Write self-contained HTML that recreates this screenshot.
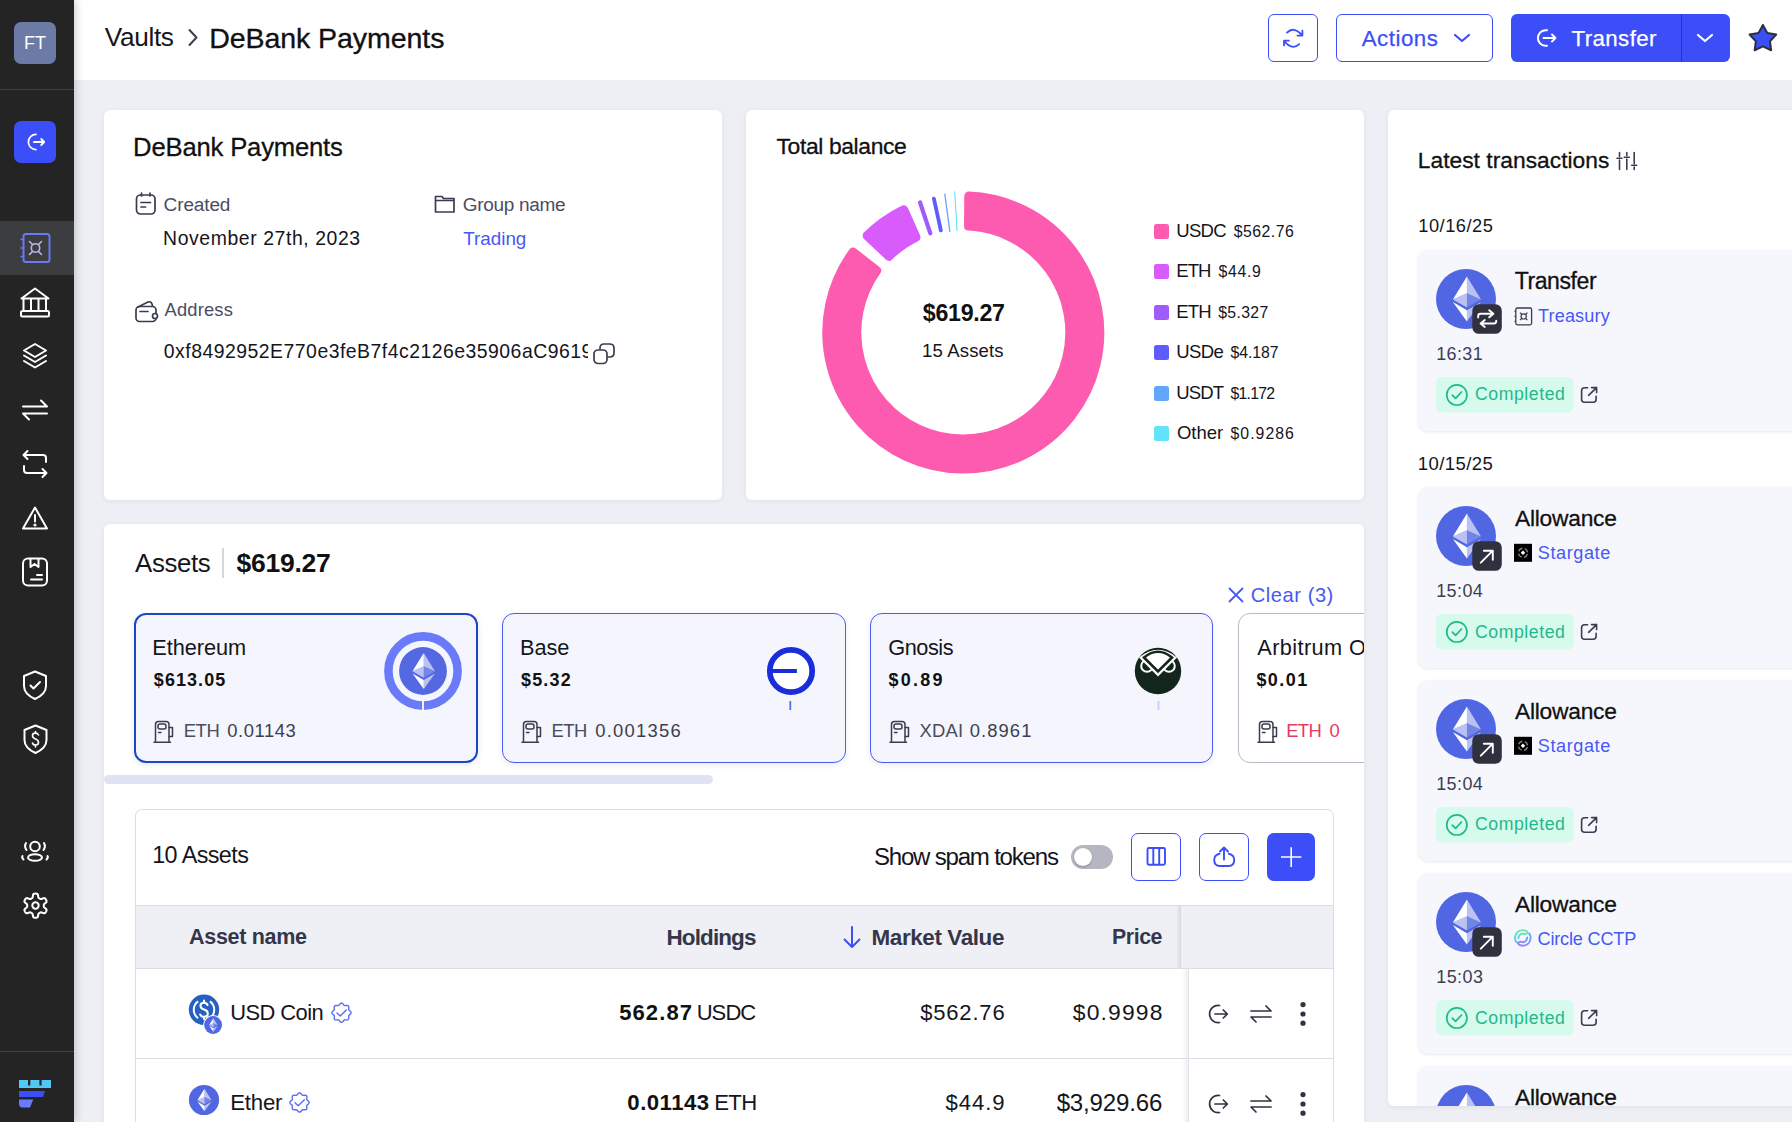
<!DOCTYPE html>
<html><head><meta charset="utf-8">
<style>
*{box-sizing:border-box;margin:0;padding:0}
html,body{width:1792px;height:1122px;overflow:hidden;background:#eeeff4;font-family:"Liberation Sans",sans-serif;color:#15151c;position:relative}
.abs{position:absolute}
#side{position:absolute;left:0;top:0;width:74px;height:1122px;background:#242424;z-index:5;box-shadow:2px 0 8px rgba(0,0,0,0.18)}
.card{position:absolute;background:#fff;border-radius:6px;box-shadow:0 1px 5px rgba(40,40,70,0.07)}
.t{position:absolute;white-space:nowrap;line-height:1}
</style></head><body>
<div id="side">
  <div class="abs" style="left:14px;top:22px;width:42px;height:42px;border-radius:7px;background:#6c7ba6;color:#fff;font-size:18px;text-align:center;line-height:42px">FT</div>
  <div class="abs" style="left:0;top:89px;width:74px;height:1px;background:#3e4056"></div>
  <div class="abs" style="left:14px;top:121px;width:42px;height:42px;border-radius:7px;background:#3b4ef8"></div>
  <div class="abs" style="left:0;top:221px;width:74px;height:54px;background:#3c3d3f"></div>
  <div class="abs" style="left:0;top:1051px;width:74px;height:1px;background:#3e4056"></div>

  <svg class="abs" style="left:0;top:0" width="74" height="1122" viewBox="0 0 74 1122" fill="none" stroke="#fff" stroke-width="2" stroke-linecap="round" stroke-linejoin="round">
    <!-- transfer icon in blue btn -->
    <path d="M36 134.4 A7.6 7.6 0 1 0 36 149.6" stroke-width="1.7"/>
    <path d="M33.9 142 H44 M41.2 139 L44.2 142 L41.2 145" stroke-width="1.8"/>
    <!-- vault (active) -->
    <rect x="23.5" y="234" width="26" height="28" rx="2.5" stroke="#6a78f5" stroke-width="2"/>
    <path d="M21 239.5h2.5 M21 248h2.5 M21 256.5h2.5" stroke="#6a78f5" stroke-width="1.6"/>
    <circle cx="35.5" cy="248" r="4.2" stroke="#b3bbec" stroke-width="1.6"/>
    <path d="M29.5 241.5l3 3 M41.5 241.5l-3 3 M29.5 254.5l3-3 M41.5 254.5l-3-3" stroke="#b3bbec" stroke-width="1.6"/>
    <!-- bank -->
    <path d="M21.5 298.5 L35 288.5 L48.5 298.5 Z"/>
    <rect x="21" y="311" width="28" height="5.5" rx="1.5"/>
    <path d="M23.5 299v12 M31 299v12 M38.5 299v12 M46 299v12"/>
    <!-- layers -->
    <path d="M35 344 L46 350.5 L35 357 L24 350.5 Z"/>
    <path d="M24 355.5 L35 362 L46 355.5"/>
    <path d="M24 361 L35 367.5 L46 361"/>
    <!-- swap -->
    <path d="M23 406.5 H47 M41 400.5 L47 406.5"/>
    <path d="M47 413.5 H23 M29 419.5 L23 413.5"/>
    <!-- repeat -->
    <path d="M27.5 451 L23.5 455 L27.5 459 M23.5 455 H43 Q46 455 46 458 V462"/>
    <path d="M42.5 477 L46.5 473 L42.5 469 M46.5 473 H27 Q24 473 24 470 V466"/>
    <!-- warning -->
    <path d="M35 507.5 L47 528.5 H23 Z"/>
    <path d="M35 515v6.5" /><circle cx="35" cy="525" r="0.6" fill="#fff"/>
    <!-- book/box -->
    <rect x="23" y="558.5" width="24" height="27" rx="5"/>
    <path d="M30.5 559v8l4-3 4 3v-8"/>
    <path d="M31 579.5h11 M37 575h5" />
    <!-- shield check -->
    <path d="M35 671.5 L46 676 V686 Q46 694 35 699 Q24 694 24 686 V676 Z"/>
    <path d="M30.5 685.5 L33.5 688.5 L40 682"/>
    <!-- shield $ -->
    <path d="M35.5 725.5 L46.5 730 V740 Q46.5 748 35.5 753 Q24.5 748 24.5 740 V730 Z"/>
    <path d="M38.5 735 Q37.5 733 35.5 733 Q32.5 733 32.5 735.5 Q32.5 738 35.5 739 Q38.5 740 38.5 742.5 Q38.5 745 35.5 745 Q33 745 32.5 743 M35.5 731.5v2 M35.5 745v2" stroke-width="1.6"/>
    <!-- people -->
    <circle cx="35" cy="846.5" r="4.8"/>
    <ellipse cx="35" cy="857.5" rx="7" ry="3.3"/>
    <path d="M26 843 Q24 846.5 26.5 850 M44 843 Q46 846.5 43.5 850 M22.5 856 Q21.5 857.5 23.5 859.5 M47.5 856 Q48.5 857.5 46.5 859.5"/>
    <!-- gear -->
    <path d="M43.80 905.70 L43.80 905.99 L43.80 906.28 L43.81 906.57 L43.87 906.88 L44.01 907.20 L44.35 907.58 L44.97 908.06 L45.73 908.63 L46.30 909.21 L46.55 909.72 L46.58 910.18 L46.50 910.60 L46.36 910.99 L46.18 911.38 L45.98 911.75 L45.76 912.11 L45.51 912.45 L45.24 912.78 L44.92 913.06 L44.51 913.26 L43.94 913.30 L43.15 913.09 L42.28 912.72 L41.55 912.42 L41.05 912.32 L40.70 912.36 L40.41 912.46 L40.15 912.60 L39.90 912.74 L39.65 912.89 L39.40 913.03 L39.15 913.18 L38.90 913.34 L38.66 913.53 L38.46 913.82 L38.30 914.31 L38.19 915.08 L38.07 916.02 L37.86 916.80 L37.54 917.28 L37.16 917.54 L36.76 917.67 L36.34 917.75 L35.92 917.79 L35.50 917.80 L35.08 917.79 L34.66 917.75 L34.24 917.67 L33.84 917.54 L33.46 917.28 L33.14 916.80 L32.93 916.02 L32.81 915.08 L32.70 914.31 L32.54 913.82 L32.34 913.53 L32.10 913.34 L31.85 913.18 L31.60 913.03 L31.35 912.89 L31.10 912.74 L30.85 912.60 L30.59 912.46 L30.30 912.36 L29.95 912.32 L29.45 912.42 L28.72 912.72 L27.85 913.09 L27.06 913.30 L26.49 913.26 L26.08 913.06 L25.76 912.78 L25.49 912.45 L25.24 912.11 L25.02 911.75 L24.82 911.38 L24.64 910.99 L24.50 910.60 L24.42 910.18 L24.45 909.72 L24.70 909.21 L25.27 908.63 L26.03 908.06 L26.65 907.58 L26.99 907.20 L27.13 906.88 L27.19 906.57 L27.20 906.28 L27.20 905.99 L27.20 905.70 L27.20 905.41 L27.20 905.12 L27.19 904.83 L27.13 904.52 L26.99 904.20 L26.65 903.82 L26.03 903.34 L25.27 902.77 L24.70 902.19 L24.45 901.68 L24.42 901.22 L24.50 900.80 L24.64 900.41 L24.82 900.02 L25.02 899.65 L25.24 899.29 L25.49 898.95 L25.76 898.62 L26.08 898.34 L26.49 898.14 L27.06 898.10 L27.85 898.31 L28.72 898.68 L29.45 898.98 L29.95 899.08 L30.30 899.04 L30.59 898.94 L30.85 898.80 L31.10 898.66 L31.35 898.51 L31.60 898.37 L31.85 898.22 L32.10 898.06 L32.34 897.87 L32.54 897.58 L32.70 897.09 L32.81 896.32 L32.93 895.38 L33.14 894.60 L33.46 894.12 L33.84 893.86 L34.24 893.73 L34.66 893.65 L35.08 893.61 L35.50 893.60 L35.92 893.61 L36.34 893.65 L36.76 893.73 L37.16 893.86 L37.54 894.12 L37.86 894.60 L38.07 895.38 L38.19 896.32 L38.30 897.09 L38.46 897.58 L38.66 897.87 L38.90 898.06 L39.15 898.22 L39.40 898.37 L39.65 898.51 L39.90 898.66 L40.15 898.80 L40.41 898.94 L40.70 899.04 L41.05 899.08 L41.55 898.98 L42.28 898.68 L43.15 898.31 L43.94 898.10 L44.51 898.14 L44.92 898.34 L45.24 898.62 L45.51 898.95 L45.76 899.29 L45.98 899.65 L46.18 900.02 L46.36 900.41 L46.50 900.80 L46.58 901.22 L46.55 901.68 L46.30 902.19 L45.73 902.77 L44.97 903.34 L44.35 903.82 L44.01 904.20 L43.87 904.52 L43.81 904.83 L43.80 905.12 L43.80 905.41 L43.80 905.70Z"/>
    <circle cx="35.5" cy="905.5" r="3.2"/>
  </svg>
  <svg class="abs" style="left:0;top:1070px" width="74" height="50" viewBox="0 1070 74 50">
    <path d="M19 1080 H28 V1085.5 H30.3 V1080 H39.4 V1085.5 H41.6 V1080 H51 V1088 H19 Z" fill="#4fc8f5"/>
    <path d="M19 1091 H45 L43 1097 H19 Z" fill="#3b4efc"/>
    <path d="M19 1099.5 H33.2 L30 1107.6 H23 Q19 1107.6 19 1104 Z" fill="#6b7afc"/>
  </svg>
</div>
<div class="abs" style="left:74px;top:0;width:1718px;height:80px;background:#fff"></div>
<div class="t" style="left:104.75px;top:24.00px;font-size:26.23px;letter-spacing:-0.350px;color:#16161d;">Vaults</div>
<svg class="abs" style="left:186px;top:28px" width="14" height="20" viewBox="0 0 14 20"><path d="M3.5 2 L10.5 9.5 L3.5 17" fill="none" stroke="#3d3f55" stroke-width="2" stroke-linecap="round" stroke-linejoin="round"/></svg>
<div class="t" style="left:209.25px;top:24.00px;font-size:28.55px;letter-spacing:-0.089px;color:#111;-webkit-text-stroke:0.35px #111;">DeBank Payments</div>
<div class="abs" style="left:1268px;top:14px;width:50px;height:48px;border:1.2px solid #3b4ef8;border-radius:6px"></div>
<svg class="abs" style="left:1268px;top:14px" width="50" height="48" viewBox="0 0 50 48" fill="none" stroke="#3b4ef8" stroke-width="1.8" stroke-linecap="round" stroke-linejoin="round">
    <path d="M19 18.6 Q25.5 12 33.5 20.6 M34.4 16.6 V21.6 H29.4"/>
    <path d="M31.2 30.2 Q24.5 36.5 16.7 27.6 M16 31.4 V26.7 H20.9"/></svg>
<div class="abs" style="left:1336px;top:14px;width:157px;height:48px;border:1.2px solid #3b4ef8;border-radius:6px"></div>
<div class="t" style="left:1361.70px;top:28.00px;font-size:22.32px;letter-spacing:0.508px;color:#3b4ef8;-webkit-text-stroke:0.25px #3b4ef8;">Actions</div>
<svg class="abs" style="left:1452px;top:30px" width="20" height="16" viewBox="0 0 20 16"><path d="M3 5 L10 11 L17 5" fill="none" stroke="#3b4ef8" stroke-width="2.2" stroke-linecap="round" stroke-linejoin="round"/></svg>
<div class="abs" style="left:1511px;top:14px;width:219px;height:48px;background:#3b4ef8;border-radius:6px"></div>
<div class="abs" style="left:1681px;top:14px;width:1px;height:48px;background:#2433b8"></div>
<svg class="abs" style="left:1534px;top:26px" width="26" height="24" viewBox="0 0 26 24" fill="none" stroke="#fff" stroke-width="1.9" stroke-linecap="round" stroke-linejoin="round">
    <path d="M13 4.3 A7.8 7.8 0 1 0 13 19.7"/><path d="M9.5 12 H21.5 M18 8.5 L21.5 12 L18 15.5"/></svg>
<div class="t" style="left:1571.50px;top:28.00px;font-size:22.32px;letter-spacing:0.393px;color:#fff;-webkit-text-stroke:0.25px #fff;">Transfer</div>
<svg class="abs" style="left:1695px;top:30px" width="20" height="16" viewBox="0 0 20 16"><path d="M3 5 L10 11 L17 5" fill="none" stroke="#fff" stroke-width="2.2" stroke-linecap="round" stroke-linejoin="round"/></svg>
<svg class="abs" style="left:1740px;top:18px" width="46" height="42" viewBox="1740 18 46 42"><path d="M1762.90 24.90 L1767.25 32.91 L1776.21 34.57 L1769.94 41.19 L1771.13 50.23 L1762.90 46.30 L1754.67 50.23 L1755.86 41.19 L1749.59 34.57 L1758.55 32.91Z" fill="#3b4ef8" stroke="#2d2f3d" stroke-width="2" stroke-linejoin="round"/></svg>
<div class="card" style="left:104px;top:110px;width:618px;height:390px"></div>
<div class="t" style="left:133.10px;top:135.00px;font-size:25.65px;letter-spacing:-0.186px;color:#111;-webkit-text-stroke:0.3px #111;">DeBank Payments</div>
<svg class="abs" style="left:134px;top:191px" width="24" height="26" viewBox="0 0 24 26" fill="none" stroke="#3a3c50" stroke-width="1.7" stroke-linecap="round" stroke-linejoin="round">
    <rect x="2.5" y="4" width="18.5" height="19" rx="4"/><path d="M7.5 2v3 M16 2v3 M7 11.5h9.5 M7 16h4.5"/></svg>
<div class="t" style="left:163.60px;top:195.00px;font-size:18.99px;letter-spacing:-0.125px;color:#4a4c63;">Created</div>
<div class="t" style="left:163.10px;top:229.00px;font-size:19.42px;letter-spacing:0.578px;color:#15151c;">November 27th, 2023</div>
<svg class="abs" style="left:433px;top:193px" width="24" height="22" viewBox="0 0 24 22" fill="none" stroke="#3a3c50" stroke-width="1.7" stroke-linejoin="round">
    <path d="M2.5 3.5 H9 L10.5 5.5 H21 V19 H2.5 Z M2.5 7.5 H21"/></svg>
<div class="t" style="left:462.70px;top:195.00px;font-size:18.99px;letter-spacing:-0.294px;color:#4a4c63;">Group name</div>
<div class="t" style="left:463.20px;top:230.00px;font-size:18.84px;letter-spacing:0.000px;color:#4858f4;">Trading</div>
<svg class="abs" style="left:134px;top:299px" width="26" height="25" viewBox="0 0 26 25" fill="none" stroke="#3a3c50" stroke-width="1.7" stroke-linecap="round" stroke-linejoin="round">
    <path d="M4 8 L14 3 Q17 2 18 5 L18.5 7"/><rect x="2" y="7.5" width="20" height="15" rx="3.5"/><path d="M6 12.5h8"/><circle cx="21" cy="17" r="2.5" fill="#fff"/></svg>
<div class="t" style="left:164.60px;top:301.00px;font-size:18.33px;letter-spacing:0.167px;color:#4a4c63;">Address</div>
<div class="abs" style="left:0;top:0;width:588px;height:400px;overflow:hidden"><div class="t" style="left:163.85px;top:342.00px;font-size:19.42px;letter-spacing:0.484px;color:#15151c;">0xf8492952E770e3feB7f4c2126e35906aC9619F4d</div>
</div>
<svg class="abs" style="left:592px;top:342px" width="24" height="24" viewBox="0 0 24 24" fill="none" stroke="#3a3c50" stroke-width="1.7" stroke-linejoin="round">
    <rect x="2" y="8" width="13" height="13.5" rx="4"/><path d="M8 7.5 V6 Q8 2 12 2 H17.5 Q22 2 22 6 V11 Q22 15 17.5 15 H15.5"/></svg>
<div class="card" style="left:746px;top:110px;width:618px;height:390px"></div>
<div class="t" style="left:776.50px;top:135.00px;font-size:22.90px;letter-spacing:-0.383px;color:#111;-webkit-text-stroke:0.3px #111;">Total balance</div>
<svg class="abs" style="left:0;top:0" width="1792" height="1122" viewBox="0 0 1792 1122"><path d="M968.75 196.11 A136.5 136.5 0 1 1 853.03 252.05 L876.68 270.54 A106.5 106.5 0 1 0 968.54 226.13 Z" fill="#fd5bb0" stroke="#fd5bb0" stroke-width="9" stroke-linejoin="round"/><path d="M867.10 235.66 A136.5 136.5 0 0 1 903.70 209.70 L915.91 237.12 A106.5 106.5 0 0 0 888.95 256.25 Z" fill="#d85bfb" stroke="#d85bfb" stroke-width="9" stroke-linejoin="round"/><path d="M930.31 233.34 L920.06 202.50" stroke="#a05bfb" stroke-width="4.2" stroke-linecap="round"/><path d="M940.86 230.44 L933.88 198.70" stroke="#5e5cff" stroke-width="3.8" stroke-linecap="round"/><path d="M949.81 231.40 L944.85 194.23" stroke="#61a6fb" stroke-width="1.3" stroke-linecap="round"/><path d="M957.07 230.69 L954.69 191.76" stroke="#62e2fb" stroke-width="1.1" stroke-linecap="round"/></svg>
<div class="abs" style="left:1154px;top:224.0px;width:15px;height:15px;border-radius:2.5px;background:#fd5bb0"></div>
<div class="t" style="left:1176.20px;top:222.00px;font-size:18.55px;letter-spacing:-0.683px;color:#15151c;">USDC</div>
<div class="t" style="left:1233.65px;top:224.00px;font-size:15.80px;letter-spacing:0.517px;color:#15151c;">$562.76</div>
<div class="abs" style="left:1154px;top:264.4px;width:15px;height:15px;border-radius:2.5px;background:#d85bfb"></div>
<div class="t" style="left:1176.20px;top:262.00px;font-size:18.55px;letter-spacing:-0.875px;color:#15151c;">ETH</div>
<div class="t" style="left:1218.45px;top:264.00px;font-size:15.80px;letter-spacing:0.700px;color:#15151c;">$44.9</div>
<div class="abs" style="left:1154px;top:304.8px;width:15px;height:15px;border-radius:2.5px;background:#a05bfb"></div>
<div class="t" style="left:1176.20px;top:303.00px;font-size:18.55px;letter-spacing:-0.775px;color:#15151c;">ETH</div>
<div class="t" style="left:1218.15px;top:305.00px;font-size:15.80px;letter-spacing:0.350px;color:#15151c;">$5.327</div>
<div class="abs" style="left:1154px;top:345.2px;width:15px;height:15px;border-radius:2.5px;background:#5e5cff"></div>
<div class="t" style="left:1176.20px;top:343.00px;font-size:18.55px;letter-spacing:-0.583px;color:#15151c;">USDe</div>
<div class="t" style="left:1230.55px;top:345.00px;font-size:15.80px;letter-spacing:-0.050px;color:#15151c;">$4.187</div>
<div class="abs" style="left:1154px;top:385.6px;width:15px;height:15px;border-radius:2.5px;background:#61a6fb"></div>
<div class="t" style="left:1176.20px;top:384.00px;font-size:18.55px;letter-spacing:-0.850px;color:#15151c;">USDT</div>
<div class="t" style="left:1230.55px;top:386.00px;font-size:15.80px;letter-spacing:-0.750px;color:#15151c;">$1.172</div>
<div class="abs" style="left:1154px;top:426.0px;width:15px;height:15px;border-radius:2.5px;background:#62e2fb"></div>
<div class="t" style="left:1176.95px;top:424.00px;font-size:18.55px;letter-spacing:0.000px;color:#15151c;">Other</div>
<div class="t" style="left:1230.55px;top:426.00px;font-size:15.80px;letter-spacing:1.033px;color:#15151c;">$0.9286</div>
<div class="t" style="left:922.85px;top:302.00px;font-size:23.19px;letter-spacing:-0.292px;color:#111;font-weight:bold;">$619.27</div>
<div class="t" style="left:922.10px;top:342.00px;font-size:18.55px;letter-spacing:0.144px;color:#15151c;">15 Assets</div>
<div class="card" style="left:1388px;top:110px;width:420px;height:996px"></div>
<div class="t" style="left:1417.75px;top:149.00px;font-size:22.75px;letter-spacing:0.036px;color:#111;-webkit-text-stroke:0.3px #111;">Latest transactions</div>
<svg class="abs" style="left:1614px;top:150px" width="26" height="22" viewBox="0 0 26 22" fill="none" stroke="#3a3c50" stroke-width="1.6" stroke-linecap="round">
    <path d="M5.5 2.5v4 M5.5 10v9.5 M3 8.2h5 M12.8 2.5v3 M12.8 9v10.5 M10.3 7.2h5 M20.2 2.5v11 M20.2 17v2.5 M17.7 15.2h5"/></svg>
<div class="abs" style="left:0;top:0;width:1792px;height:1122px;clip-path:inset(110px 0 16px 1388px)">
<div class="t" style="left:1418.25px;top:217.00px;font-size:18.26px;letter-spacing:0.507px;color:#15151c;">10/16/25</div>
<div class="t" style="left:1417.80px;top:455.00px;font-size:18.55px;letter-spacing:0.414px;color:#15151c;">10/15/25</div>
<div class="abs" style="left:1417.5px;top:250px;width:400px;height:181px;background:#f6f7fc;border-radius:10px;box-shadow:0 1px 3px rgba(30,30,60,0.10)"></div>
<svg class="abs" style="left:1420px;top:250px" width="220" height="181" viewBox="1420 250 220 181"><circle cx="1466" cy="299" r="30" fill="#5166e2"/><polygon points="1466.94,276.50 1466.94,293.13 1481.00,299.41" fill="#fff" fill-opacity=".6"/><polygon points="1466.94,276.50 1452.88,299.41 1466.94,293.13" fill="#fff"/><polygon points="1466.94,310.19 1466.94,321.50 1481.00,302.04" fill="#fff" fill-opacity=".6"/><polygon points="1466.94,321.50 1466.94,310.19 1452.88,302.04" fill="#fff"/><polygon points="1466.94,307.57 1481.00,299.41 1466.94,293.13" fill="#fff" fill-opacity=".2"/><polygon points="1452.88,299.41 1466.94,307.57 1466.94,293.13" fill="#fff" fill-opacity=".6"/><rect x="1472.3" y="304.2" width="29.5" height="29.6" rx="6.5" fill="#30313f"/><path d="M1478.2 317.4 V316.0 Q1478.2 313.8 1480.3999999999999 313.8 H1493.3999999999999 M1489.2 310.3 L1493.3999999999999 313.8 L1489.2 317.3 M1496.2 320.59999999999997 V321.3 Q1496.2 323.5 1494.0 323.5 H1480.6 M1484.8 320.0 L1480.6 323.5 L1484.8 327.0" fill="none" stroke="#fff" stroke-width="1.9" stroke-linecap="round" stroke-linejoin="round"/><rect x="1515.8" y="308.0" width="15.8" height="16.8" rx="1.5" fill="none" stroke="#3a3c50" stroke-width="1.3"/><path d="M1514.3 311.3h1.5 M1514.3 316.3h1.5 M1514.3 321.3h1.5" stroke="#3a3c50" stroke-width="1"/><circle cx="1523.7" cy="316.40000000000003" r="2.6" fill="none" stroke="#3a3c50" stroke-width="1.2"/><path d="M1520 312.7l1.8 1.8 M1527.4 312.7l-1.8 1.8 M1520 320.1l1.8-1.8 M1527.4 320.1l-1.8-1.8" stroke="#3a3c50" stroke-width="1.2"/><rect x="1435.9" y="377" width="137.9" height="35.6" rx="6" fill="#d6fbec"/><circle cx="1456.85" cy="394.9" r="10.1" fill="none" stroke="#1fb98a" stroke-width="1.7"/><path d="M1452.3 395.2 L1455.6 398.4 L1461.5 392" fill="none" stroke="#1fb98a" stroke-width="1.7" stroke-linecap="round" stroke-linejoin="round"/><path d="M1587.6 387.8 H1584.6 Q1581.6 387.8 1581.6 390.8 V399.3 Q1581.6 402.3 1584.6 402.3 H1593.1 Q1596.1 402.3 1596.1 399.3 V396.3 M1588.6 395.3 L1596.6 387.6 M1591.6 387.6 H1596.6 V392.6" fill="none" stroke="#3a3c50" stroke-width="1.6" stroke-linecap="round" stroke-linejoin="round"/></svg>
<div class="t" style="left:1514.70px;top:270.00px;font-size:23.04px;letter-spacing:-0.429px;color:#111;-webkit-text-stroke:0.3px #111;">Transfer</div>
<div class="t" style="left:1538.00px;top:307.00px;font-size:18.12px;letter-spacing:0.136px;color:#4858f4;">Treasury</div>
<div class="t" style="left:1436.15px;top:346.00px;font-size:17.97px;letter-spacing:0.425px;color:#3d3e50;">16:31</div>
<div class="t" style="left:1475.00px;top:386.00px;font-size:17.68px;letter-spacing:0.550px;color:#22b98a;">Completed</div>
<div class="abs" style="left:1417.5px;top:487px;width:400px;height:181px;background:#f6f7fc;border-radius:10px;box-shadow:0 1px 3px rgba(30,30,60,0.10)"></div>
<svg class="abs" style="left:1420px;top:487px" width="220" height="181" viewBox="1420 487 220 181"><circle cx="1466" cy="536" r="30" fill="#5166e2"/><polygon points="1466.94,513.50 1466.94,530.13 1481.00,536.41" fill="#fff" fill-opacity=".6"/><polygon points="1466.94,513.50 1452.88,536.41 1466.94,530.13" fill="#fff"/><polygon points="1466.94,547.19 1466.94,558.50 1481.00,539.04" fill="#fff" fill-opacity=".6"/><polygon points="1466.94,558.50 1466.94,547.19 1452.88,539.04" fill="#fff"/><polygon points="1466.94,544.57 1481.00,536.41 1466.94,530.13" fill="#fff" fill-opacity=".2"/><polygon points="1452.88,536.41 1466.94,544.57 1466.94,530.13" fill="#fff" fill-opacity=".6"/><rect x="1472.3" y="541.2" width="29.5" height="29.6" rx="6.5" fill="#30313f"/><path d="M1480.8 562.7 L1492.8 550.7 M1483.8 550.7 H1492.8 V559.7" fill="none" stroke="#fff" stroke-width="1.9" stroke-linecap="round" stroke-linejoin="round"/><rect x="1514" y="544.3" width="18" height="18" fill="#000" transform="translate(0,-0.5)"/><circle cx="1523" cy="552.8" r="4.6" fill="none" stroke="#8a8a8a" stroke-width="1.3" stroke-dasharray="4.7 2.53" stroke-dashoffset="5.97"/><path d="M1523 550.5999999999999 L1525.2 552.8 L1523 555.0 L1520.8 552.8 Z" fill="#fff"/><rect x="1435.9" y="614" width="137.9" height="35.6" rx="6" fill="#d6fbec"/><circle cx="1456.85" cy="631.9" r="10.1" fill="none" stroke="#1fb98a" stroke-width="1.7"/><path d="M1452.3 632.2 L1455.6 635.4 L1461.5 629" fill="none" stroke="#1fb98a" stroke-width="1.7" stroke-linecap="round" stroke-linejoin="round"/><path d="M1587.6 624.8 H1584.6 Q1581.6 624.8 1581.6 627.8 V636.3 Q1581.6 639.3 1584.6 639.3 H1593.1 Q1596.1 639.3 1596.1 636.3 V633.3 M1588.6 632.3 L1596.6 624.5999999999999 M1591.6 624.5999999999999 H1596.6 V629.5999999999999" fill="none" stroke="#3a3c50" stroke-width="1.6" stroke-linecap="round" stroke-linejoin="round"/></svg>
<div class="t" style="left:1515.00px;top:507.00px;font-size:22.75px;letter-spacing:-0.231px;color:#111;-webkit-text-stroke:0.3px #111;">Allowance</div>
<div class="t" style="left:1537.75px;top:544.00px;font-size:18.12px;letter-spacing:0.586px;color:#4858f4;">Stargate</div>
<div class="t" style="left:1436.15px;top:583.00px;font-size:17.97px;letter-spacing:0.438px;color:#3d3e50;">15:04</div>
<div class="t" style="left:1475.00px;top:624.00px;font-size:17.68px;letter-spacing:0.550px;color:#22b98a;">Completed</div>
<div class="abs" style="left:1417.5px;top:680px;width:400px;height:181px;background:#f6f7fc;border-radius:10px;box-shadow:0 1px 3px rgba(30,30,60,0.10)"></div>
<svg class="abs" style="left:1420px;top:680px" width="220" height="181" viewBox="1420 680 220 181"><circle cx="1466" cy="729" r="30" fill="#5166e2"/><polygon points="1466.94,706.50 1466.94,723.13 1481.00,729.41" fill="#fff" fill-opacity=".6"/><polygon points="1466.94,706.50 1452.88,729.41 1466.94,723.13" fill="#fff"/><polygon points="1466.94,740.19 1466.94,751.50 1481.00,732.04" fill="#fff" fill-opacity=".6"/><polygon points="1466.94,751.50 1466.94,740.19 1452.88,732.04" fill="#fff"/><polygon points="1466.94,737.57 1481.00,729.41 1466.94,723.13" fill="#fff" fill-opacity=".2"/><polygon points="1452.88,729.41 1466.94,737.57 1466.94,723.13" fill="#fff" fill-opacity=".6"/><rect x="1472.3" y="734.2" width="29.5" height="29.6" rx="6.5" fill="#30313f"/><path d="M1480.8 755.7 L1492.8 743.7 M1483.8 743.7 H1492.8 V752.7" fill="none" stroke="#fff" stroke-width="1.9" stroke-linecap="round" stroke-linejoin="round"/><rect x="1514" y="737.3" width="18" height="18" fill="#000" transform="translate(0,-0.5)"/><circle cx="1523" cy="745.8" r="4.6" fill="none" stroke="#8a8a8a" stroke-width="1.3" stroke-dasharray="4.7 2.53" stroke-dashoffset="5.97"/><path d="M1523 743.5999999999999 L1525.2 745.8 L1523 748.0 L1520.8 745.8 Z" fill="#fff"/><rect x="1435.9" y="807" width="137.9" height="35.6" rx="6" fill="#d6fbec"/><circle cx="1456.85" cy="824.9" r="10.1" fill="none" stroke="#1fb98a" stroke-width="1.7"/><path d="M1452.3 825.2 L1455.6 828.4 L1461.5 822" fill="none" stroke="#1fb98a" stroke-width="1.7" stroke-linecap="round" stroke-linejoin="round"/><path d="M1587.6 817.8 H1584.6 Q1581.6 817.8 1581.6 820.8 V829.3 Q1581.6 832.3 1584.6 832.3 H1593.1 Q1596.1 832.3 1596.1 829.3 V826.3 M1588.6 825.3 L1596.6 817.5999999999999 M1591.6 817.5999999999999 H1596.6 V822.5999999999999" fill="none" stroke="#3a3c50" stroke-width="1.6" stroke-linecap="round" stroke-linejoin="round"/></svg>
<div class="t" style="left:1515.00px;top:700.00px;font-size:22.75px;letter-spacing:-0.231px;color:#111;-webkit-text-stroke:0.3px #111;">Allowance</div>
<div class="t" style="left:1537.75px;top:737.00px;font-size:18.12px;letter-spacing:0.586px;color:#4858f4;">Stargate</div>
<div class="t" style="left:1436.15px;top:776.00px;font-size:17.97px;letter-spacing:0.438px;color:#3d3e50;">15:04</div>
<div class="t" style="left:1475.00px;top:816.00px;font-size:17.68px;letter-spacing:0.550px;color:#22b98a;">Completed</div>
<div class="abs" style="left:1417.5px;top:873px;width:400px;height:181px;background:#f6f7fc;border-radius:10px;box-shadow:0 1px 3px rgba(30,30,60,0.10)"></div>
<svg class="abs" style="left:1420px;top:873px" width="220" height="181" viewBox="1420 873 220 181"><circle cx="1466" cy="922" r="30" fill="#5166e2"/><polygon points="1466.94,899.50 1466.94,916.13 1481.00,922.41" fill="#fff" fill-opacity=".6"/><polygon points="1466.94,899.50 1452.88,922.41 1466.94,916.13" fill="#fff"/><polygon points="1466.94,933.19 1466.94,944.50 1481.00,925.04" fill="#fff" fill-opacity=".6"/><polygon points="1466.94,944.50 1466.94,933.19 1452.88,925.04" fill="#fff"/><polygon points="1466.94,930.57 1481.00,922.41 1466.94,916.13" fill="#fff" fill-opacity=".2"/><polygon points="1452.88,922.41 1466.94,930.57 1466.94,916.13" fill="#fff" fill-opacity=".6"/><rect x="1472.3" y="927.2" width="29.5" height="29.6" rx="6.5" fill="#30313f"/><path d="M1480.8 948.7 L1492.8 936.7 M1483.8 936.7 H1492.8 V945.7" fill="none" stroke="#fff" stroke-width="1.9" stroke-linecap="round" stroke-linejoin="round"/><defs><linearGradient id="cg1" x1="0" y1="1" x2="1" y2="0"><stop offset="0" stop-color="#4fcdf5"/><stop offset="1" stop-color="#74eb9a"/></linearGradient><linearGradient id="cg2" x1="0" y1="1" x2="1" y2="0"><stop offset="0" stop-color="#a57ef2"/><stop offset="1" stop-color="#5aaefb"/></linearGradient></defs><path d="M1527.81 931.92 A7.8 7.8 0 0 0 1516.82 942.91 M1518.65 939.01 A4.3 4.3 0 0 1 1524.95 934.18 L1528.60 932.68" fill="none" stroke="url(#cg1)" stroke-width="1.9"/><path d="M1518.00 944.05 A7.8 7.8 0 0 0 1528.78 932.89 M1526.95 936.79 A4.3 4.3 0 0 1 1520.65 941.62 L1517.00 943.12" fill="none" stroke="url(#cg2)" stroke-width="1.9"/><rect x="1435.9" y="1000" width="137.9" height="35.6" rx="6" fill="#d6fbec"/><circle cx="1456.85" cy="1017.9" r="10.1" fill="none" stroke="#1fb98a" stroke-width="1.7"/><path d="M1452.3 1018.2 L1455.6 1021.4 L1461.5 1015" fill="none" stroke="#1fb98a" stroke-width="1.7" stroke-linecap="round" stroke-linejoin="round"/><path d="M1587.6 1010.8 H1584.6 Q1581.6 1010.8 1581.6 1013.8 V1022.3 Q1581.6 1025.3 1584.6 1025.3 H1593.1 Q1596.1 1025.3 1596.1 1022.3 V1019.3 M1588.6 1018.3 L1596.6 1010.5999999999999 M1591.6 1010.5999999999999 H1596.6 V1015.5999999999999" fill="none" stroke="#3a3c50" stroke-width="1.6" stroke-linecap="round" stroke-linejoin="round"/></svg>
<div class="t" style="left:1515.00px;top:893.00px;font-size:22.75px;letter-spacing:-0.231px;color:#111;-webkit-text-stroke:0.3px #111;">Allowance</div>
<div class="t" style="left:1537.50px;top:930.00px;font-size:18.12px;letter-spacing:-0.180px;color:#4858f4;">Circle CCTP</div>
<div class="t" style="left:1436.15px;top:969.00px;font-size:17.97px;letter-spacing:0.500px;color:#3d3e50;">15:03</div>
<div class="t" style="left:1475.00px;top:1010.00px;font-size:17.68px;letter-spacing:0.550px;color:#22b98a;">Completed</div>
<div class="abs" style="left:1417.5px;top:1066px;width:400px;height:181px;background:#f6f7fc;border-radius:10px;box-shadow:0 1px 3px rgba(30,30,60,0.10)"></div>
<svg class="abs" style="left:1420px;top:1066px" width="220" height="181" viewBox="1420 1066 220 181"><circle cx="1466" cy="1115" r="30" fill="#5166e2"/><polygon points="1466.94,1092.50 1466.94,1109.13 1481.00,1115.41" fill="#fff" fill-opacity=".6"/><polygon points="1466.94,1092.50 1452.88,1115.41 1466.94,1109.13" fill="#fff"/><polygon points="1466.94,1126.19 1466.94,1137.50 1481.00,1118.04" fill="#fff" fill-opacity=".6"/><polygon points="1466.94,1137.50 1466.94,1126.19 1452.88,1118.04" fill="#fff"/><polygon points="1466.94,1123.57 1481.00,1115.41 1466.94,1109.13" fill="#fff" fill-opacity=".2"/><polygon points="1452.88,1115.41 1466.94,1123.57 1466.94,1109.13" fill="#fff" fill-opacity=".6"/><rect x="1472.3" y="1120.2" width="29.5" height="29.6" rx="6.5" fill="#30313f"/><path d="M1480.8 1141.7 L1492.8 1129.7 M1483.8 1129.7 H1492.8 V1138.7" fill="none" stroke="#fff" stroke-width="1.9" stroke-linecap="round" stroke-linejoin="round"/><rect x="1514" y="1123.2999999999997" width="18" height="18" fill="#000" transform="translate(0,-0.5)"/><circle cx="1523" cy="1131.8" r="4.6" fill="none" stroke="#8a8a8a" stroke-width="1.3" stroke-dasharray="4.7 2.53" stroke-dashoffset="5.97"/><path d="M1523 1129.6 L1525.2 1131.8 L1523 1134.0 L1520.8 1131.8 Z" fill="#fff"/><rect x="1435.9" y="1193" width="137.9" height="35.6" rx="6" fill="#d6fbec"/><circle cx="1456.85" cy="1210.9" r="10.1" fill="none" stroke="#1fb98a" stroke-width="1.7"/><path d="M1452.3 1211.2 L1455.6 1214.4 L1461.5 1208" fill="none" stroke="#1fb98a" stroke-width="1.7" stroke-linecap="round" stroke-linejoin="round"/><path d="M1587.6 1203.8 H1584.6 Q1581.6 1203.8 1581.6 1206.8 V1215.3 Q1581.6 1218.3 1584.6 1218.3 H1593.1 Q1596.1 1218.3 1596.1 1215.3 V1212.3 M1588.6 1211.3 L1596.6 1203.6 M1591.6 1203.6 H1596.6 V1208.6" fill="none" stroke="#3a3c50" stroke-width="1.6" stroke-linecap="round" stroke-linejoin="round"/></svg>
<div class="t" style="left:1515.00px;top:1086.00px;font-size:22.75px;letter-spacing:-0.231px;color:#111;-webkit-text-stroke:0.3px #111;">Allowance</div>
<div class="t" style="left:1537.75px;top:1123.00px;font-size:18.12px;letter-spacing:0.586px;color:#4858f4;">Stargate</div>
<div class="t" style="left:1436.15px;top:1162.00px;font-size:17.97px;letter-spacing:0.500px;color:#3d3e50;">15:03</div>
<div class="t" style="left:1475.00px;top:1202.00px;font-size:17.68px;letter-spacing:0.550px;color:#22b98a;">Completed</div>
</div>
<div class="abs" style="left:104px;top:524px;width:1260px;height:620px;background:#fff;border-radius:6px;box-shadow:0 1px 5px rgba(40,40,70,0.07)">
</div>
<div class="t" style="left:135.10px;top:551.00px;font-size:25.80px;letter-spacing:-0.380px;color:#15151c;">Assets</div>
<div class="abs" style="left:222.2px;top:548px;width:1.5px;height:30px;background:#d3d5df"></div>
<div class="t" style="left:236.50px;top:550.00px;font-size:26.52px;letter-spacing:-0.267px;color:#111;font-weight:bold;">$619.27</div>
<svg class="abs" style="left:1227px;top:586px" width="18" height="18" viewBox="0 0 18 18"><path d="M2.5 2.5 L15.5 15.5 M15.5 2.5 L2.5 15.5" stroke="#4858f4" stroke-width="1.8" stroke-linecap="round"/></svg>
<div class="t" style="left:1250.80px;top:585.00px;font-size:20.14px;letter-spacing:0.531px;color:#4858f4;">Clear (3)</div>
<div class="abs" style="left:0;top:0;width:1792px;height:1122px;clip-path:inset(524px 428px 0 104px)">
<div class="abs" style="left:134px;top:613.4px;width:344px;height:149.7px;border:2.5px solid #1b47c6;border-radius:12px;background:#f4f5fd;box-shadow:0 2px 6px rgba(40,40,80,0.10)"></div>
<div class="t" style="left:152.35px;top:637.00px;font-size:21.74px;letter-spacing:-0.064px;color:#15151c;">Ethereum</div>
<div class="t" style="left:153.85px;top:672.00px;font-size:17.97px;letter-spacing:1.075px;color:#111;font-weight:bold;">$613.05</div>
<svg class="abs" style="left:153.1px;top:720.2px" width="24" height="24" viewBox="0 0 24 24" fill="none" stroke="#3a3c50" stroke-width="1.5" stroke-linecap="round" stroke-linejoin="round">
<path d="M2.5 22 V4.5 Q2.5 1.5 5.5 1.5 H13 Q16 1.5 16 4.5 V22 M1 22.3 H17.5"/><rect x="5" y="4" width="8" height="5" rx="2"/><path d="M5.5 12.5 H8 M16 7.5 H19.5 V16.5 H16"/></svg>
<div class="t" style="left:183.70px;top:722.00px;font-size:18.41px;letter-spacing:-0.400px;color:#4a4c5e;">ETH</div>
<div class="t" style="left:227.25px;top:722.00px;font-size:18.41px;letter-spacing:0.558px;color:#3d3f50;">0.01143</div>
<svg class="abs" style="left:377.5px;top:626px" width="90" height="90" viewBox="377.5 626 90 90"><circle cx="422.5" cy="671" r="34.6" fill="none" stroke="#6a7bfa" stroke-width="8.6"/><rect x="421.6" y="699" width="1.8" height="12" fill="#fff"/><circle cx="422.5" cy="671" r="23.9" fill="#5468e2"/><polygon points="423.25,653.08 423.25,666.32 434.45,671.33" fill="#fff" fill-opacity=".6"/><polygon points="423.25,653.08 412.04,671.33 423.25,666.32" fill="#fff"/><polygon points="423.25,679.92 423.25,688.92 434.45,673.42" fill="#fff" fill-opacity=".6"/><polygon points="423.25,688.92 423.25,679.92 412.04,673.42" fill="#fff"/><polygon points="423.25,677.83 434.45,671.33 423.25,666.32" fill="#fff" fill-opacity=".2"/><polygon points="412.04,671.33 423.25,677.83 423.25,666.32" fill="#fff" fill-opacity=".6"/></svg>
<div class="abs" style="left:502px;top:613.4px;width:343.5px;height:149.7px;border:1.2px solid #4a5cf2;border-radius:12px;background:#f4f5fd;box-shadow:0 2px 6px rgba(40,40,80,0.08)"></div>
<div class="t" style="left:520.05px;top:637.00px;font-size:21.74px;letter-spacing:-0.100px;color:#15151c;">Base</div>
<div class="t" style="left:520.95px;top:672.00px;font-size:17.97px;letter-spacing:1.225px;color:#111;font-weight:bold;">$5.32</div>
<svg class="abs" style="left:521.1px;top:720.2px" width="24" height="24" viewBox="0 0 24 24" fill="none" stroke="#3a3c50" stroke-width="1.5" stroke-linecap="round" stroke-linejoin="round">
<path d="M2.5 22 V4.5 Q2.5 1.5 5.5 1.5 H13 Q16 1.5 16 4.5 V22 M1 22.3 H17.5"/><rect x="5" y="4" width="8" height="5" rx="2"/><path d="M5.5 12.5 H8 M16 7.5 H19.5 V16.5 H16"/></svg>
<div class="t" style="left:551.60px;top:722.00px;font-size:18.41px;letter-spacing:-0.600px;color:#4a4c5e;">ETH</div>
<div class="t" style="left:595.25px;top:722.00px;font-size:18.41px;letter-spacing:1.250px;color:#3d3f50;">0.001356</div>
<svg class="abs" style="left:750.5px;top:631px" width="80" height="80" viewBox="750.5 631 80 80"><circle cx="790.5" cy="671" r="21.2" fill="#fff" stroke="#1a2ddb" stroke-width="5.75"/><rect x="771.5" y="669" width="24.9" height="4" fill="#1a2ddb"/><rect x="788.9" y="701" width="1.8" height="9" fill="#5b6cf5"/></svg>
<div class="abs" style="left:869.5px;top:613.4px;width:343.5px;height:149.7px;border:1.2px solid #4a5cf2;border-radius:12px;background:#f4f5fd;box-shadow:0 2px 6px rgba(40,40,80,0.08)"></div>
<div class="t" style="left:888.30px;top:637.00px;font-size:21.74px;letter-spacing:-0.470px;color:#15151c;">Gnosis</div>
<div class="t" style="left:888.45px;top:672.00px;font-size:17.97px;letter-spacing:2.250px;color:#111;font-weight:bold;">$0.89</div>
<svg class="abs" style="left:888.6px;top:720.2px" width="24" height="24" viewBox="0 0 24 24" fill="none" stroke="#3a3c50" stroke-width="1.5" stroke-linecap="round" stroke-linejoin="round">
<path d="M2.5 22 V4.5 Q2.5 1.5 5.5 1.5 H13 Q16 1.5 16 4.5 V22 M1 22.3 H17.5"/><rect x="5" y="4" width="8" height="5" rx="2"/><path d="M5.5 12.5 H8 M16 7.5 H19.5 V16.5 H16"/></svg>
<div class="t" style="left:919.40px;top:722.00px;font-size:18.41px;letter-spacing:0.250px;color:#4a4c5e;">XDAI</div>
<div class="t" style="left:969.65px;top:722.00px;font-size:18.41px;letter-spacing:1.090px;color:#3d3f50;">0.8961</div>
<svg class="abs" style="left:1117.5px;top:631px" width="80" height="80" viewBox="1117.5 631 80 80"><circle cx="1157.5" cy="671" r="23.2" fill="#13261b"/><circle cx="1146.5" cy="666" r="5.8" fill="#13261b" stroke="#fff" stroke-width="2"/><circle cx="1168.5" cy="666" r="5.8" fill="#13261b" stroke="#fff" stroke-width="2"/><path d="M1138.5 657.5 Q1157.5 642 1176.5 657.5 L1157.5 676.5 Z" fill="#fff"/><path d="M1143.5 657.5 Q1157.5 646 1171.5 657.5 L1157.5 671.5 Z" fill="#fff" stroke="#13261b" stroke-width="2.6" stroke-linejoin="miter"/><rect x="1157.1" y="701" width="1.8" height="9" fill="#c8cdfa"/></svg>
<div class="abs" style="left:1237.5px;top:613.4px;width:344px;height:149.7px;border:1px solid #b9bbc6;border-radius:12px;background:#fff"></div>
<div class="t" style="left:1257.30px;top:637.00px;font-size:21.74px;letter-spacing:0.382px;color:#15151c;">Arbitrum One</div>
<div class="t" style="left:1256.45px;top:672.00px;font-size:17.97px;letter-spacing:1.438px;color:#111;font-weight:bold;">$0.01</div>
<svg class="abs" style="left:1256.6px;top:720.2px" width="24" height="24" viewBox="0 0 24 24" fill="none" stroke="#3a3c50" stroke-width="1.5" stroke-linecap="round" stroke-linejoin="round">
<path d="M2.5 22 V4.5 Q2.5 1.5 5.5 1.5 H13 Q16 1.5 16 4.5 V22 M1 22.3 H17.5"/><rect x="5" y="4" width="8" height="5" rx="2"/><path d="M5.5 12.5 H8 M16 7.5 H19.5 V16.5 H16"/></svg>
<div class="t" style="left:1286.20px;top:722.00px;font-size:18.41px;letter-spacing:-0.600px;color:#e63a5e;">ETH</div>
<div class="t" style="left:1329.45px;top:722.00px;font-size:18.41px;letter-spacing:0.000px;color:#e63a5e;">0</div>
</div>
<div class="abs" style="left:104px;top:775px;width:609px;height:9px;border-radius:5px;background:#dfe2f3"></div>
<div class="abs" style="left:134.5px;top:808.5px;width:1199px;height:340px;border:1px solid #dcdde5;border-radius:7px;background:#fff"></div>
<div class="t" style="left:152.15px;top:844.00px;font-size:23.33px;letter-spacing:-0.550px;color:#15151c;">10 Assets</div>
<div class="t" style="left:873.90px;top:845.00px;font-size:24.06px;letter-spacing:-1.207px;color:#15151c;">Show spam tokens</div>
<div class="abs" style="left:1071px;top:845px;width:42px;height:24px;border-radius:12px;background:#b5b6c2"></div>
<div class="abs" style="left:1073.8px;top:847.9px;width:18.3px;height:18.3px;border-radius:50%;background:#fff;box-shadow:0 1px 2px rgba(0,0,0,0.25)"></div>
<div class="abs" style="left:1131.1px;top:833.1px;width:49.6px;height:47.5px;border:1.2px solid #3b4ef8;border-radius:7px;background:#fff"></div>
<div class="abs" style="left:1199px;top:833.1px;width:49.6px;height:47.5px;border:1.2px solid #3b4ef8;border-radius:7px;background:#fff"></div>
<svg class="abs" style="left:1131px;top:833px" width="50" height="48" viewBox="1131 833 50 48" fill="none" stroke="#3b4ef8" stroke-width="1.9" stroke-linejoin="round">
<rect x="1147.5" y="848" width="17.5" height="16.8" rx="1.5"/><path d="M1153.3 848v16.8 M1159.2 848v16.8"/></svg>
<svg class="abs" style="left:1199px;top:833px" width="50" height="48" viewBox="1199 833 50 48" fill="none" stroke="#3b4ef8" stroke-width="1.9" stroke-linecap="round" stroke-linejoin="round">
<path d="M1224 847.5 V859.5 M1220 851.5 L1224 847.5 L1228 851.5"/><path d="M1219.5 853.8 Q1214.2 855 1214.2 860 Q1214.2 866 1220 866 H1228.5 Q1234.2 866 1234.2 860 Q1234.2 855 1228.8 853.8"/></svg>
<div class="abs" style="left:1267px;top:833.1px;width:48px;height:47.5px;border-radius:7px;background:#3b4ef8"></div>
<svg class="abs" style="left:1267px;top:833px" width="48" height="48" viewBox="1267 833 48 48"><path d="M1291.2 847.3 V866.9 M1281 857 H1301.4" stroke="#fff" stroke-width="1.6"/></svg>
<div class="abs" style="left:135.5px;top:905px;width:1197px;height:63.5px;background:#eff0f5;border-top:1px solid #dcdde5;border-bottom:1px solid #dcdde5"></div>
<div class="abs" style="left:1176px;top:906px;width:4px;height:62px;background:linear-gradient(90deg,rgba(0,0,0,0),rgba(0,0,0,0.08))"></div>
<div class="abs" style="left:1179.5px;top:906px;width:1px;height:62px;background:#d6d7df"></div>
<div class="t" style="left:189.10px;top:927.00px;font-size:21.52px;letter-spacing:-0.322px;color:#34364a;font-weight:bold;">Asset name</div>
<div class="t" style="left:666.50px;top:927.00px;font-size:22.46px;letter-spacing:-0.871px;color:#34364a;font-weight:bold;">Holdings</div>
<svg class="abs" style="left:840px;top:924px" width="24" height="26" viewBox="0 0 24 26"><path d="M12 3 V23 M4.5 15.5 L12 23 L19.5 15.5" fill="none" stroke="#3b4ef8" stroke-width="2" stroke-linecap="round" stroke-linejoin="round"/></svg>
<div class="t" style="left:871.50px;top:927.00px;font-size:22.46px;letter-spacing:-0.400px;color:#34364a;font-weight:bold;">Market Value</div>
<div class="t" style="left:1112.10px;top:927.00px;font-size:21.30px;letter-spacing:-0.438px;color:#34364a;font-weight:bold;">Price</div>
<div class="abs" style="left:135.5px;top:1057.5px;width:1197px;height:1px;background:#dcdde5"></div>
<div class="abs" style="left:1182px;top:968.5px;width:6.5px;height:89px;background:linear-gradient(90deg,rgba(0,0,0,0),rgba(0,0,0,0.07))"></div>
<div class="abs" style="left:1188.3px;top:968.5px;width:0.8px;height:89px;background:#e2e3ea"></div>
<svg class="abs" style="left:1200px;top:999px" width="120" height="30" viewBox="1200 999 120 30" fill="none" stroke="#30323f" stroke-width="1.7" stroke-linecap="round" stroke-linejoin="round">
<path d="M1219.5 1005.5 A8.6 8.6 0 1 0 1219.5 1022.5"/><path d="M1215 1014 H1227.3 M1223.3 1010 L1227.3 1014 L1223.3 1018"/>
<path d="M1251 1011 H1271 L1266 1006 M1271 1017 H1251 L1256 1022"/>
<circle cx="1303" cy="1004.6" r="2.6" fill="#30323f" stroke="none"/><circle cx="1303" cy="1014" r="2.6" fill="#30323f" stroke="none"/><circle cx="1303" cy="1023.2" r="2.6" fill="#30323f" stroke="none"/></svg>
<div class="abs" style="left:135.5px;top:1147.5px;width:1197px;height:1px;background:#dcdde5"></div>
<div class="abs" style="left:1182px;top:1058.5px;width:6.5px;height:89px;background:linear-gradient(90deg,rgba(0,0,0,0),rgba(0,0,0,0.07))"></div>
<div class="abs" style="left:1188.3px;top:1058.5px;width:0.8px;height:89px;background:#e2e3ea"></div>
<svg class="abs" style="left:1200px;top:1089px" width="120" height="30" viewBox="1200 1089 120 30" fill="none" stroke="#30323f" stroke-width="1.7" stroke-linecap="round" stroke-linejoin="round">
<path d="M1219.5 1095.5 A8.6 8.6 0 1 0 1219.5 1112.5"/><path d="M1215 1104 H1227.3 M1223.3 1100 L1227.3 1104 L1223.3 1108"/>
<path d="M1251 1101 H1271 L1266 1096 M1271 1107 H1251 L1256 1112"/>
<circle cx="1303" cy="1094.6" r="2.6" fill="#30323f" stroke="none"/><circle cx="1303" cy="1104" r="2.6" fill="#30323f" stroke="none"/><circle cx="1303" cy="1113.2" r="2.6" fill="#30323f" stroke="none"/></svg>
<svg class="abs" style="left:185px;top:990px" width="45" height="50" viewBox="185 990 45 50"><circle cx="204" cy="1009.8" r="15.2" fill="#2461c2"/><path d="M198.1 1001.4 A10.3 10.3 0 0 0 198.1 1018.2 M209.9 1001.4 A10.3 10.3 0 0 1 209.9 1018.2" fill="none" stroke="#fff" stroke-width="2"/><path d="M207.5 1005 Q206.5 1002.8 204 1002.8 Q200.5 1002.8 200.5 1005.8 Q200.5 1008.5 204 1009.5 Q207.8 1010.5 207.8 1013.5 Q207.8 1016.8 204 1016.8 Q201 1016.8 200.2 1014.5 M204 1000.5 V1002.8 M204 1016.8 V1019" fill="none" stroke="#fff" stroke-width="2.1" stroke-linecap="round"/><circle cx="213.1" cy="1025" r="10" fill="#fff"/><circle cx="213.1" cy="1025" r="8.9" fill="#5166e2"/><polygon points="213.38,1018.33 213.38,1023.26 217.55,1025.12" fill="#fff" fill-opacity=".6"/><polygon points="213.38,1018.33 209.21,1025.12 213.38,1023.26" fill="#fff"/><polygon points="213.38,1028.32 213.38,1031.67 217.55,1025.90" fill="#fff" fill-opacity=".6"/><polygon points="213.38,1031.67 213.38,1028.32 209.21,1025.90" fill="#fff"/><polygon points="213.38,1027.54 217.55,1025.12 213.38,1023.26" fill="#fff" fill-opacity=".2"/><polygon points="209.21,1025.12 213.38,1027.54 213.38,1023.26" fill="#fff" fill-opacity=".6"/></svg>
<div class="t" style="left:230.15px;top:1002.00px;font-size:21.88px;letter-spacing:-0.529px;color:#15151c;">USD Coin</div>
<svg class="abs" style="left:328.4px;top:999.1px" width="27.0" height="27.399999999999977" viewBox="328.4 999.1 27.0 27.399999999999977" fill="none" stroke="#5b6cf6" stroke-width="1.4" stroke-linejoin="round"><path d="M341.90 1003.20 L342.52 1003.34 L343.09 1003.73 L343.60 1004.27 L344.04 1004.83 L344.45 1005.30 L344.88 1005.59 L345.40 1005.70 L346.02 1005.66 L346.73 1005.57 L347.47 1005.54 L348.15 1005.67 L348.69 1006.01 L349.03 1006.55 L349.16 1007.23 L349.13 1007.97 L349.04 1008.67 L349.00 1009.30 L349.11 1009.82 L349.40 1010.25 L349.87 1010.66 L350.43 1011.10 L350.97 1011.61 L351.36 1012.18 L351.50 1012.80 L351.36 1013.42 L350.97 1013.99 L350.43 1014.50 L349.87 1014.94 L349.40 1015.35 L349.11 1015.78 L349.00 1016.30 L349.04 1016.92 L349.13 1017.63 L349.16 1018.37 L349.03 1019.05 L348.69 1019.59 L348.15 1019.93 L347.47 1020.06 L346.73 1020.03 L346.02 1019.94 L345.40 1019.90 L344.88 1020.01 L344.45 1020.30 L344.04 1020.77 L343.60 1021.33 L343.09 1021.87 L342.52 1022.26 L341.90 1022.40 L341.28 1022.26 L340.71 1021.87 L340.20 1021.33 L339.76 1020.77 L339.35 1020.30 L338.92 1020.01 L338.40 1019.90 L337.77 1019.94 L337.07 1020.03 L336.33 1020.06 L335.65 1019.93 L335.11 1019.59 L334.77 1019.05 L334.64 1018.37 L334.67 1017.63 L334.76 1016.92 L334.80 1016.30 L334.69 1015.78 L334.40 1015.35 L333.93 1014.94 L333.37 1014.50 L332.83 1013.99 L332.44 1013.42 L332.30 1012.80 L332.44 1012.18 L332.83 1011.61 L333.37 1011.10 L333.93 1010.66 L334.40 1010.25 L334.69 1009.82 L334.80 1009.30 L334.76 1008.67 L334.67 1007.97 L334.64 1007.23 L334.77 1006.55 L335.11 1006.01 L335.65 1005.67 L336.33 1005.54 L337.07 1005.57 L337.77 1005.66 L338.40 1005.70 L338.92 1005.59 L339.35 1005.30 L339.76 1004.83 L340.20 1004.27 L340.71 1003.73 L341.28 1003.34 L341.90 1003.20Z"/><path d="M337.4 1013.0999999999999 L340.59999999999997 1016.0999999999999 L346.7 1010.0" stroke-linecap="round"/></svg>
<div class="t" style="left:619.15px;top:1002.00px;font-size:22.03px;letter-spacing:1.100px;color:#111;font-weight:bold;">562.87</div>
<div class="t" style="left:696.65px;top:1002.00px;font-size:22.03px;letter-spacing:-0.917px;color:#15151c;">USDC</div>
<div class="t" style="left:920.15px;top:1002.00px;font-size:22.03px;letter-spacing:0.825px;color:#15151c;">$562.76</div>
<div class="t" style="left:1072.85px;top:1001.00px;font-size:22.90px;letter-spacing:1.133px;color:#15151c;">$0.9998</div>
<svg class="abs" style="left:185px;top:1080px" width="40" height="40" viewBox="185 1080 40 40"><circle cx="204" cy="1100" r="15.1" fill="#5166e2"/><polygon points="204.47,1088.67 204.47,1097.05 211.55,1100.21" fill="#fff" fill-opacity=".6"/><polygon points="204.47,1088.67 197.39,1100.21 204.47,1097.05" fill="#fff"/><polygon points="204.47,1105.63 204.47,1111.33 211.55,1101.53" fill="#fff" fill-opacity=".6"/><polygon points="204.47,1111.33 204.47,1105.63 197.39,1101.53" fill="#fff"/><polygon points="204.47,1104.31 211.55,1100.21 204.47,1097.05" fill="#fff" fill-opacity=".2"/><polygon points="197.39,1100.21 204.47,1104.31 204.47,1097.05" fill="#fff" fill-opacity=".6"/></svg>
<div class="t" style="left:230.15px;top:1092.00px;font-size:22.17px;letter-spacing:-0.163px;color:#15151c;">Ether</div>
<svg class="abs" style="left:286.3px;top:1089.4px" width="27.099999999999966" height="27.0" viewBox="286.3 1089.4 27.099999999999966 27.0" fill="none" stroke="#5b6cf6" stroke-width="1.4" stroke-linejoin="round"><path d="M299.85 1093.25 L300.47 1093.39 L301.05 1093.78 L301.56 1094.32 L302.00 1094.88 L302.41 1095.35 L302.85 1095.65 L303.38 1095.75 L304.00 1095.71 L304.71 1095.62 L305.45 1095.60 L306.13 1095.74 L306.67 1096.08 L307.01 1096.62 L307.15 1097.30 L307.13 1098.04 L307.04 1098.75 L307.00 1099.37 L307.10 1099.90 L307.40 1100.34 L307.87 1100.75 L308.43 1101.19 L308.97 1101.70 L309.36 1102.28 L309.50 1102.90 L309.36 1103.52 L308.97 1104.10 L308.43 1104.61 L307.87 1105.05 L307.40 1105.46 L307.10 1105.90 L307.00 1106.43 L307.04 1107.05 L307.13 1107.76 L307.15 1108.50 L307.01 1109.18 L306.67 1109.72 L306.13 1110.06 L305.45 1110.20 L304.71 1110.18 L304.00 1110.09 L303.38 1110.05 L302.85 1110.15 L302.41 1110.45 L302.00 1110.92 L301.56 1111.48 L301.05 1112.02 L300.47 1112.41 L299.85 1112.55 L299.23 1112.41 L298.65 1112.02 L298.14 1111.48 L297.70 1110.92 L297.29 1110.45 L296.85 1110.15 L296.32 1110.05 L295.70 1110.09 L294.99 1110.18 L294.25 1110.20 L293.57 1110.06 L293.03 1109.72 L292.69 1109.18 L292.55 1108.50 L292.57 1107.76 L292.66 1107.05 L292.70 1106.43 L292.60 1105.90 L292.30 1105.46 L291.83 1105.05 L291.27 1104.61 L290.73 1104.10 L290.34 1103.52 L290.20 1102.90 L290.34 1102.28 L290.73 1101.70 L291.27 1101.19 L291.83 1100.75 L292.30 1100.34 L292.60 1099.90 L292.70 1099.37 L292.66 1098.75 L292.57 1098.04 L292.55 1097.30 L292.69 1096.62 L293.03 1096.08 L293.57 1095.74 L294.25 1095.60 L294.99 1095.62 L295.70 1095.71 L296.32 1095.75 L296.85 1095.65 L297.29 1095.35 L297.70 1094.88 L298.14 1094.32 L298.65 1093.78 L299.23 1093.39 L299.85 1093.25Z"/><path d="M295.35 1103.2 L298.55 1106.2 L304.65000000000003 1100.1000000000001" stroke-linecap="round"/></svg>
<div class="t" style="left:627.35px;top:1092.00px;font-size:22.17px;letter-spacing:0.492px;color:#111;font-weight:bold;">0.01143</div>
<div class="t" style="left:714.25px;top:1092.00px;font-size:22.17px;letter-spacing:-0.675px;color:#15151c;">ETH</div>
<div class="t" style="left:945.45px;top:1092.00px;font-size:22.17px;letter-spacing:0.912px;color:#15151c;">$44.9</div>
<div class="t" style="left:1056.65px;top:1091.00px;font-size:24.06px;letter-spacing:-0.156px;color:#15151c;">$3,929.66</div>
</body></html>
